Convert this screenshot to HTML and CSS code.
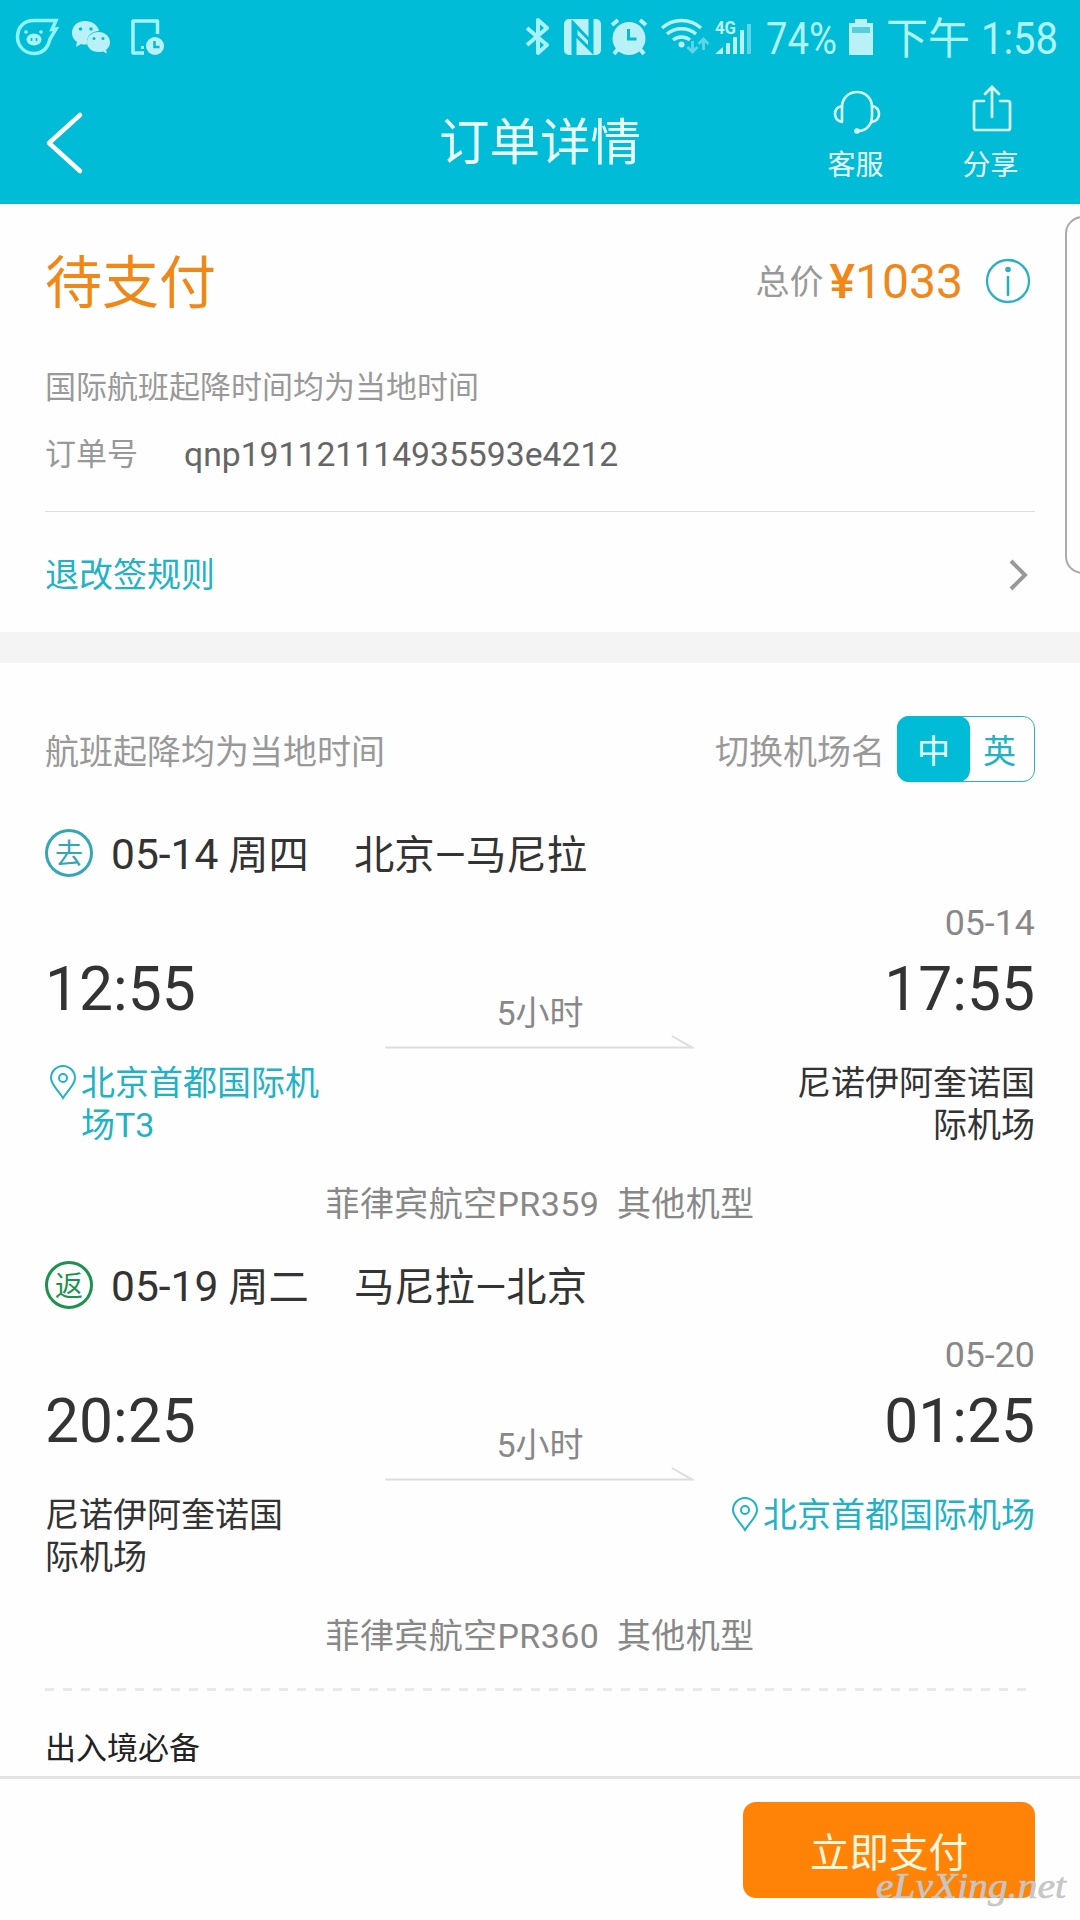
FILE: index.html
```
<!DOCTYPE html>
<html lang="zh-CN">
<head>
  <meta charset="UTF-8">
  <meta name="viewport" content="width=device-width, initial-scale=1.0">
  <title>订单详情</title>
  <link rel="stylesheet" href="styles.css">
</head>
<body>
  <header>
    <div class="status-bar">
      <svg class="status-left" width="180" height="75" viewBox="0 0 180 75">
        <path d="M56 20.500H35C23 20 17.500 28 17.500 37c0 9 7 16.500 16.500 16.500 9 0 14-6 16-14.500l6-10-4 .5z" fill="none" stroke="#8ff3fc" stroke-width="3.500"/>
        <ellipse cx="34" cy="39.500" rx="7.500" ry="6" fill="#a9f3fa"/>
        <circle cx="26" cy="32" r="1.800" fill="#a9f3fa"/>
        <circle cx="41" cy="32" r="1.800" fill="#a9f3fa"/>
        <path d="M31.500 38v3M36.500 38v3" stroke="#00bcd7" stroke-width="1.600"/>
        <path d="M85 21c-8 0-13 5.500-13 12 0 4 2 7 5 9l-1 5 5-3c2 .6 4 .6 6 .5C86 36 92 31 99 31c-1-6-7-10-14-10z" fill="#b9f1f7"/>
        <path d="M98.500 32C92 32 87 36.500 87 42.300S92 52 98.500 52c1.500 0 3 0 4.500-.5l4 2-1-3.500c2.600-2 4-4.500 4-7.700C110 36.500 105 32 98.500 32z" fill="#b9f1f7"/>
        <g fill="#00bcd7"><circle cx="80.500" cy="29" r="1.800"/><circle cx="91" cy="29" r="1.800"/><circle cx="94" cy="38.500" r="1.500"/><circle cx="103" cy="38.500" r="1.500"/></g>
        <path d="M157.500 34V21H133v32h11" fill="none" stroke="#a5f2fa" stroke-width="3.500" stroke-linejoin="round"/>
        <path d="M141 46h3v3h-3z" fill="#a5f2fa"/>
        <circle cx="155" cy="46" r="9" fill="#b9f1f7"/>
        <path d="M154.500 41v6h5" fill="none" stroke="#00bcd7" stroke-width="2.500"/>
      </svg>
      <svg class="status-right" width="560" height="75" viewBox="520 0 560 75">
        <path d="M527 28l20 17-9 8V20l9 8-20 17" fill="none" stroke="#a5f2fa" stroke-width="4" stroke-linejoin="round"/>
        <rect x="564" y="19" width="37" height="36" rx="5" fill="#b9f1f7"/>
        <path d="M571.500 19l17 18V19h5v36l-17-17v17h-5z" fill="#00bcd7"/>
        <path d="M577.500 30v5l10.500 10v-4.500z" fill="#b9f1f7"/>
        <circle cx="629" cy="38.500" r="16.500" fill="#b9f1f7"/>
        <path d="M612 25l6-5M646 25l-6-5M618 49l-4 5M640 49l4 5" stroke="#b9f1f7" stroke-width="4"/>
        <path d="M628.500 29v10h8" fill="none" stroke="#00bcd7" stroke-width="3"/>
        <g fill="none" stroke="#b9f1f7" stroke-width="3.500">
          <path d="M662 28c11-10 28-10 39 0M667 34c8-7 21-7 29 0M673 40c5-4 12-4 17 0"/>
        </g>
        <circle cx="681.500" cy="44.500" r="3" fill="#b9f1f7"/>
        <path d="M692.500 41v10M687.500 47l5 5 5-5M703.500 50V40M698.500 44l5-5 5 5" fill="none" stroke="#5fd5e5" stroke-width="2.800"/>
        <text class="net" x="715" y="34" textLength="21" lengthAdjust="spacingAndGlyphs">4G</text>
        <path d="M715 54l8-7v7zM726 43h4v11h-4zM733 37h4v17h-4zM740 30h4v24h-4z" fill="#b9f1f7"/>
        <path d="M747 24h4v30h-4z" fill="#5fd5e5"/>
        <text class="clock" x="766" y="54" textLength="71" lengthAdjust="spacingAndGlyphs">74%</text>
        <path d="M855 19h12v4h6v32h-24V23h6z" fill="#b9f1f7"/>
        <path d="M852 27h18v6h-18z" fill="#55cfdd"/>
        <text class="clock cn" x="886" y="54" textLength="84" lengthAdjust="spacingAndGlyphs">下午</text>
        <text class="clock" x="981" y="54" textLength="77" lengthAdjust="spacingAndGlyphs">1:58</text>
      </svg>
    </div>
    <nav>
      <svg class="back" width="40" height="64" viewBox="0 0 40 64">
        <path d="M35 4L4 32l31 28" fill="none" stroke="#fff" stroke-width="4.500" stroke-linecap="round" stroke-linejoin="round"/>
      </svg>
      <h1>订单详情</h1>
      <div class="actions">
        <div class="action">
          <svg width="50" height="52" viewBox="0 0 50 52">
            <g fill="none" stroke="#d8fbff" stroke-width="2.600" stroke-linecap="round">
              <path d="M11 36V22C11 13 18 7 26 7s15 6 15 15v9c0 9-6 15-14 15"/>
              <path d="M11 21c-5 1-7 4-7 8s2 7 7 8M41 21c5 1 7 4 7 8s-2 7-7 8"/>
            </g>
            <circle cx="26" cy="46" r="2.800" fill="#d8fbff"/>
          </svg>
          <span>客服</span>
        </div>
        <div class="action">
          <svg width="50" height="52" viewBox="0 0 50 52">
            <path d="M18 16h-8a2 2 0 0 0-2 2v25a2 2 0 0 0 2 2h32a2 2 0 0 0 2-2V18a2 2 0 0 0-2-2h-8M26 32V3M19 9l7-7 7 7" fill="none" stroke="#d8fbff" stroke-width="2.700" stroke-linecap="round"/>
          </svg>
          <span>分享</span>
        </div>
      </div>
    </nav>
  </header>

  <section class="summary">
    <div class="row total-row">
      <h2>待支付</h2>
      <span class="total-label">总价</span>
      <span class="price"><b>¥</b>1033</span>
      <svg width="46" height="46" viewBox="0 0 46 46">
        <circle cx="23" cy="23" r="21" fill="none" stroke="#29b0c1" stroke-width="2.300"/>
        <circle cx="23" cy="11.500" r="2.800" fill="#29b0c1"/>
        <path d="M23 19v18" stroke="#29b0c1" stroke-width="2.600" stroke-linecap="round"/>
      </svg>
    </div>
    <p class="note">国际航班起降时间均为当地时间</p>
    <p class="order"><span>订单号</span><span class="order-no">qnp191121114935593e4212</span></p>
    <div class="row rules">
      <a>退改签规则</a>
      <svg width="20" height="32" viewBox="0 0 20 32">
        <path d="M2 2l14 14L2 30" fill="none" stroke="#999" stroke-width="4"/>
      </svg>
    </div>
    <div class="side-tab"></div>
  </section>

  <section class="flights">
    <div class="row switch-row">
      <span>航班起降均为当地时间</span>
      <span class="switch-label">切换机场名</span>
      <div class="switch"><span class="on">中</span><span class="off">英</span></div>
    </div>

    <div class="leg">
      <div class="leg-title">
        <span class="tag">去</span><span class="day"><b>05-14</b> 周四</span><span>北京—马尼拉</span>
      </div>
      <div class="arrive-date">05-14</div>
      <div class="leg-body">
        <div class="side">
          <div class="time">12:55</div>
          <div class="airport link">
            <svg width="34" height="36" viewBox="0 0 34 36"><path d="M17 33C13 26 5 20 5 13a12 12 0 0 1 24 0c0 7-8 13-12 20z"/><circle cx="17" cy="13" r="4"/></svg>
            <span>北京首都国际机<br>场T3</span>
          </div>
        </div>
        <div class="duration">
          <span>5小时</span>
          <svg width="310" height="16" viewBox="0 0 310 16"><path d="M0 12.500h307L287 1"/></svg>
        </div>
        <div class="side right">
          <div class="time">17:55</div>
          <div class="airport"><span>尼诺伊阿奎诺国<br>际机场</span></div>
        </div>
      </div>
      <div class="plane">菲律宾航空PR359&nbsp; 其他机型</div>
    </div>

    <div class="leg">
      <div class="leg-title">
        <span class="tag back-tag">返</span><span class="day"><b>05-19</b> 周二</span><span>马尼拉—北京</span>
      </div>
      <div class="arrive-date">05-20</div>
      <div class="leg-body">
        <div class="side">
          <div class="time">20:25</div>
          <div class="airport"><span>尼诺伊阿奎诺国<br>际机场</span></div>
        </div>
        <div class="duration">
          <span>5小时</span>
          <svg width="310" height="16" viewBox="0 0 310 16"><path d="M0 12.500h307L287 1"/></svg>
        </div>
        <div class="side right">
          <div class="time">01:25</div>
          <div class="airport link">
            <svg width="34" height="36" viewBox="0 0 34 36"><path d="M17 33C13 26 5 20 5 13a12 12 0 0 1 24 0c0 7-8 13-12 20z"/><circle cx="17" cy="13" r="4"/></svg>
            <span>北京首都国际机场</span>
          </div>
        </div>
      </div>
      <div class="plane">菲律宾航空PR360&nbsp; 其他机型</div>
    </div>

    <div class="dashes"></div>
    <h3>出入境必备</h3>
  </section>

  <footer>
    <button>立即支付</button>
    <svg class="watermark" width="200" height="56" viewBox="0 0 200 56">
      <text x="2" y="34" textLength="190" lengthAdjust="spacingAndGlyphs">eLvXing.net</text>
    </svg>
  </footer>
</body>
</html>
```
FILE: styles.css
```
* {
  box-sizing: border-box;
}

body {
  margin: 0;
  width: 1080px;
  height: 1920px;
  overflow: hidden;
  display: flex;
  flex-direction: column;
  background: #fefefe;
  font-family: Roboto, "Noto Sans CJK SC", sans-serif;
  font-size: 34px;
  color: #333;
}

h1, h2, h3, p {
  margin: 0;
  font-weight: 400;
}

svg {
  display: block;
  flex-shrink: 0;
}

.row {
  display: flex;
  align-items: center;
}

header {
  height: 204px;
  background: #00bcd7;
  color: #e9fdff;
}

.status-bar {
  display: flex;
  justify-content: space-between;
  height: 75px;
}

.clock {
  font-size: 45px;
  fill: #b0f4fb;
}

.clock.cn {
  font-size: 43px;
}

.net {
  font-size: 18px;
  font-weight: 700;
  fill: #b9f1f7;
}

nav {
  display: grid;
  grid-template-columns: 300px 480px 300px;
  height: 129px;
}

.back {
  margin: 36px 0 0 45px;
}

h1 {
  font-size: 50.500px;
  line-height: 135px;
  text-align: center;
}

.actions {
  display: flex;
  padding-left: 8px;
}

.action {
  width: 135px;
  padding-top: 10px;
  display: flex;
  flex-direction: column;
  align-items: center;
  font-size: 28px;
  line-height: 40px;
}

.action span {
  margin-top: 9px;
}

.summary {
  position: relative;
  height: 428px;
  padding: 0 45px;
  color: #999;
}

.total-row {
  height: 154px;
}

h2 {
  flex: 1;
  margin-top: -6px;
  font-size: 57px;
  color: #f18717;
}

.total-label {
  margin-top: -4px;
}

.price {
  margin: 0 22px 0 6px;
  font-size: 48px;
  color: #f18717;
}

.price b {
  font-weight: 500;
}

.total-row svg {
  margin-right: 4px;
}

.note {
  font-size: 31px;
  line-height: 60px;
}

.order {
  display: flex;
  height: 94px;
  padding-top: 7px;
  font-size: 31px;
  line-height: 60px;
  border-bottom: 1px solid #ddd;
}

.order-no {
  margin-left: 46px;
  font-size: 33.7px;
  color: #666;
}

.rules {
  height: 126px;
  justify-content: space-between;
  padding: 0 6px 0 0;
}

.rules a {
  margin-top: -5px;
  color: #22b2c5;
}

/* drawer handle that sticks out of the right edge */
.side-tab {
  position: absolute;
  top: 12px;
  right: -20px;
  width: 35px;
  height: 358px;
  border: 2px solid #aaa;
  border-radius: 20px;
}

.flights {
  height: 1144px;
  padding: 52px 45px 0;
  border-top: 31px solid #f4f4f4;
}

.switch-row {
  height: 68px;
  color: #999;
}

.switch-label {
  margin-left: auto;
}

.switch {
  display: flex;
  width: 138px;
  height: 66px;
  margin-left: 12px;
  border: 1px solid #2fb0c2;
  border-radius: 12px;
  font-size: 33px;
  line-height: 69px;
  text-align: center;
}

.on {
  width: 73px;
  height: 66px;
  margin: -1px 0 -1px -1px;
  line-height: 71px;
  border-radius: 12px;
  background: #00bcd7;
  color: #e9fdff;
}

.off {
  width: 59px;
  color: #22b2c5;
}

.leg {
  height: 432px;
}

.leg-title {
  display: flex;
  align-items: center;
  height: 140px;
  font-size: 40.300px;
}

.leg-title > span {
  margin-top: -3px;
}

.leg-title .tag {
  width: 48px;
  height: 48px;
  margin-top: 0;
  border: 3px solid #34a7b5;
  border-radius: 50%;
  font-size: 28px;
  line-height: 46px;
  text-align: center;
  color: #34a7b5;
}

.leg-title .back-tag {
  border-color: #1c9250;
  color: #1c9250;
}

.day {
  width: 243px;
  margin-left: 18px;
  white-space: nowrap;
}

.day b {
  font-size: 42.500px;
  font-weight: 400;
}

.arrive-date {
  height: 36px;
  margin-top: -18px;
  line-height: 36px;
  font-size: 35.800px;
  text-align: right;
  color: #888;
}

.leg-body {
  display: grid;
  grid-template-columns: 340px 310px 340px;
  height: 247px;
}

.time {
  height: 76px;
  margin-top: 11px;
  line-height: 76px;
  font-size: 60.500px;
}

.airport {
  display: flex;
  margin-top: 34px;
  line-height: 42px;
}

.right {
  text-align: right;
}

.right .airport {
  justify-content: flex-end;
}

.link {
  color: #22b2c5;
}

.airport svg {
  margin: 3px 1px 0 1px;
}

.airport path,
.airport circle {
  fill: none;
  stroke: #22b2c5;
  stroke-width: 2;
}

.duration {
  padding-top: 51px;
  line-height: 42px;
  text-align: center;
  color: #888;
}

.duration svg {
  margin-top: 1px;
}

.duration path {
  fill: none;
  stroke: #ddd;
  stroke-width: 2;
}

.plane {
  height: 27px;
  line-height: 32px;
  letter-spacing: 0.4px;
  text-align: center;
  color: #888;
}

.dashes {
  height: 3px;
  margin-top: 41px;
  background: repeating-linear-gradient(90deg, #e9e9e9 0 9px, transparent 9px 18px);
}

h3 {
  margin-top: 37px;
  font-size: 31px;
  line-height: 42px;
  color: #222;
}

footer {
  position: relative;
  display: flex;
  justify-content: flex-end;
  height: 144px;
  padding: 23px 45px;
  border-top: 3px solid #e3e3e3;
  background: #fefefe;
}

button {
  width: 292px;
  height: 96px;
  padding: 0 0 2px;
  border: 0;
  border-radius: 13px;
  background: #ff8307;
  font: 39.500px Roboto, "Noto Sans CJK SC", sans-serif;
  color: #fff8e0;
}

.watermark {
  position: absolute;
  right: 6px;
  bottom: 0;
}

.watermark text {
  font: italic 36px "Liberation Serif", serif;
  fill: #c6c6c6;
  stroke: #c6c6c6;
  stroke-width: 0.6px;
}
```
